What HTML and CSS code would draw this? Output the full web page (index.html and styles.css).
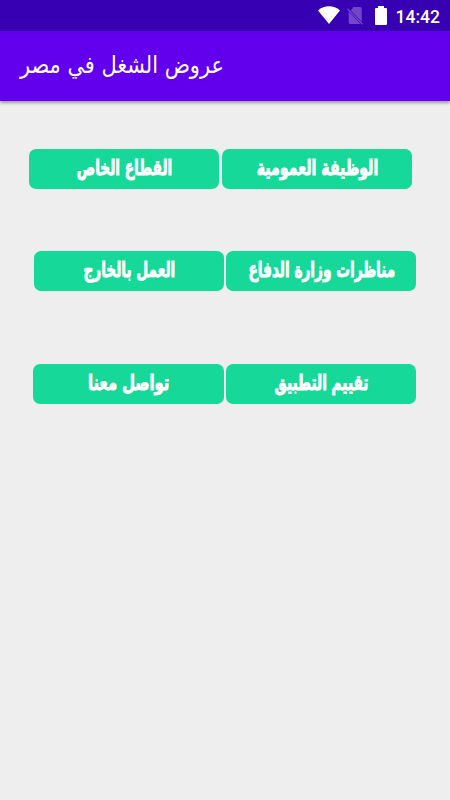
FILE: index.html
```html
<!DOCTYPE html>
<html lang="ar">

<head>
    <meta charset="utf-8">
    <title>عروض الشغل في مصر</title>
    <link rel="stylesheet" href="styles.css">
</head>

<body>
    <div class="statusbar">
        <svg class="wifi" width="22" height="18" viewBox="0 0 22 18">
            <path fill="#fff" d="M0 4.400C6.200-1 15.800-1 22 4.400L11 18z"/>
        </svg>
        <svg class="nosim" width="17" height="18" viewBox="0 0 17 18">
            <path fill="#7347cc" d="M6.500 0H13.300q1.400 0 1.400 1.400V14.800L3.900 3.400zM1.700 4.500L13.500 17H3.100q-1.400 0-1.400-1.400z"/>
            <path stroke="#7347cc" stroke-width="1.300" d="M.4 1.800L15.500 17.300"/>
        </svg>
        <svg class="battery" width="12" height="19" viewBox="0 0 12 19">
            <path fill="#fff" d="M3 0h6v2h2q1 0 1 1v15q0 1-1 1H1q-1 0-1-1V3q0-1 1-1h2z"/>
        </svg>
        <span class="clock">14:42</span>
    </div>
    <header class="appbar">
        <h1 dir="rtl">عروض الشغل في مصر</h1>
    </header>
    <main>
        <div class="row first">
            <button dir="rtl"><span>القطاع الخاص</span></button>
            <button dir="rtl"><span class="wide">الوظيفة العمومية</span></button>
        </div>
        <div class="row second">
            <button dir="rtl"><span>العمل بالخارج</span></button>
            <button dir="rtl"><span>مناظرات وزارة الدفاع</span></button>
        </div>
        <div class="row third">
            <button dir="rtl"><span class="wider">تواصل معنا</span></button>
            <button dir="rtl"><span>تقييم التطبيق</span></button>
        </div>
    </main>
</body>

</html>
```
FILE: styles.css
```css
body {
    margin: 0;
    min-height: 100vh;
    background-color: #eeeeee;
    font-family: Roboto, "DejaVu Sans", sans-serif;
}

.statusbar {
    display: flex;
    justify-content: flex-end;
    box-sizing: border-box;
    height: 31px;
    padding: 6px 10px 0 0;
    background-color: #3700b3;
}

.nosim {
    margin: 1px 0 0 7px;
}

.battery {
    margin-left: 11px;
}

.clock {
    margin-left: 9px;
    color: #fff;
    font-size: 17.500px;
    font-weight: 500;
    line-height: 22px;
}

.appbar {
    display: flex;
    align-items: center;
    box-sizing: border-box;
    height: 70px;
    padding: 0 0 2px 20px;
    background-color: #6200ee;
    box-shadow: 0 2px 3px rgba(0, 0, 0, 0.350);
}

h1 {
    margin: 0;
    color: #fff;
    font-family: "DejaVu Sans", sans-serif;
    font-size: 23px;
    font-weight: normal;
    line-height: 30px;
    transform: scale(0.907, 1.040);
    transform-origin: left center;
}

main {
    padding-top: 48px;
}

.row {
    display: flex;
}

.first {
    gap: 3px;
    padding-left: 29px;
}

.second {
    gap: 2px;
    margin-top: 62px;
    padding-left: 34px;
}

.third {
    gap: 2px;
    margin-top: 73px;
    padding-left: 33px;
}

button {
    width: 190px;
    height: 40px;
    padding: 0 0 4px 1px;
    border: none;
    border-radius: 7px;
    background-color: #16d999;
    color: #fff;
    font-family: "DejaVu Sans Condensed", "DejaVu Sans", sans-serif;
    font-size: 18px;
    font-weight: bold;
    font-stretch: condensed;
    white-space: nowrap;
}

.third button:first-child {
    width: 191px;
}

/* tall narrow lettering on the buttons */
button span {
    display: inline-block;
    transform: scale(0.845, 1.200);
    -webkit-text-stroke: 0.700px #fff;
}

button .wide {
    transform: scale(0.875, 1.200);
}

button .wider {
    transform: scale(0.910, 1.200);
}
```
